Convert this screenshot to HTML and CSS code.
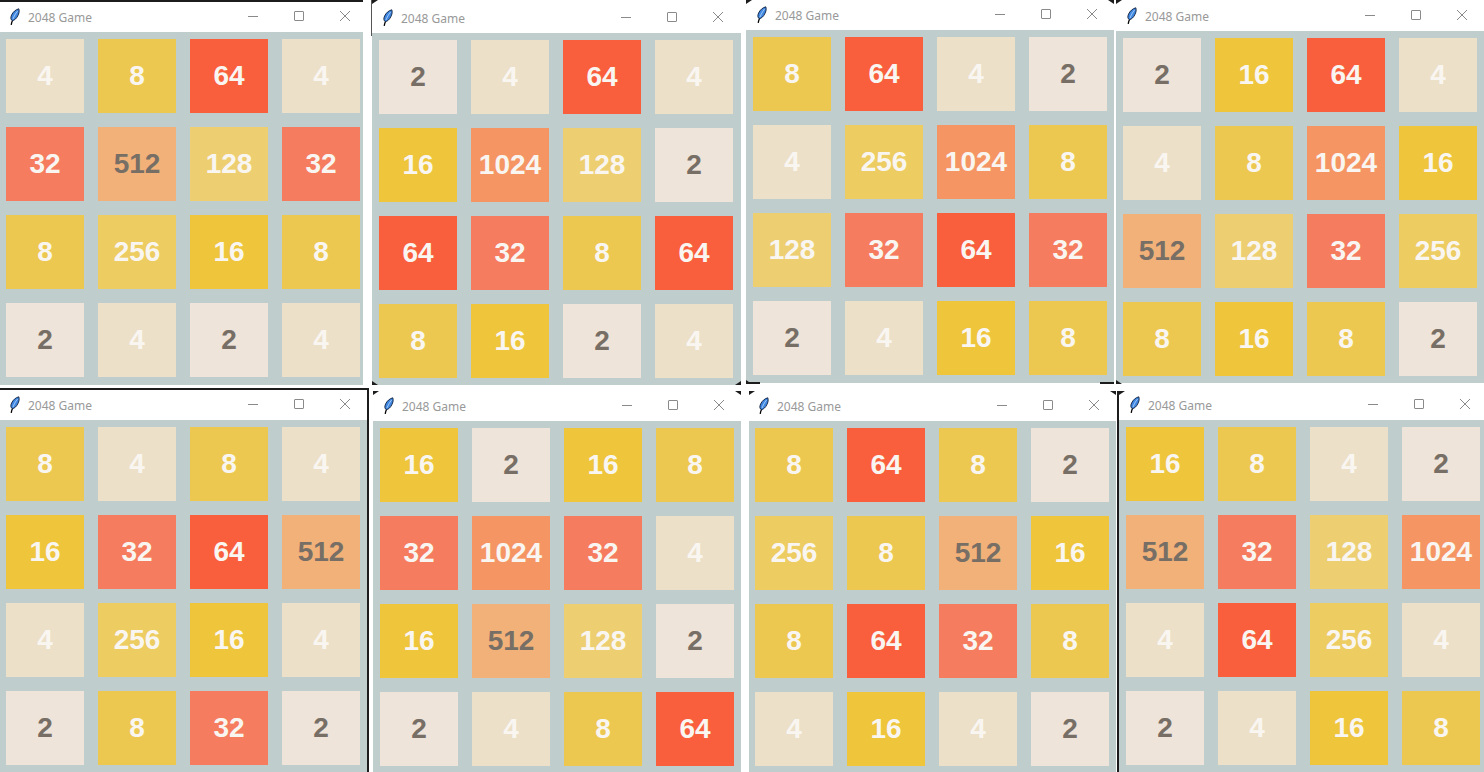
FILE: index.html
```html
<!DOCTYPE html>
<html lang="en">
<head>
<meta charset="utf-8">
<title>2048 Game</title>
<link rel="stylesheet" href="styles.css">
</head>
<body>
<svg class="defs" width="0" height="0" aria-hidden="true">
  <symbol id="feather" viewBox="0 0 12 18">
    <path d="M2.2 16.8 C2.6 14.5 3 13.4 3.6 12.2" fill="none" stroke="#000" stroke-width="1.3"/>
    <path d="M3.5 12.6 C1.6 12 1.4 9.6 2.6 7 C4 4 6.6 1.6 9.8 0.8 C10.6 3 10 5.6 8.8 7.8 C7.6 10.2 5.6 12.4 3.5 12.6 Z" fill="#3f86e0" stroke="#0b1c3a" stroke-width="0.9"/>
    <path d="M4 11 C5 8.4 6.4 5.6 8.6 3" fill="none" stroke="#a9d0f7" stroke-width="0.9"/>
  </symbol>
  <symbol id="min" viewBox="0 0 10 10"><path d="M0 5.5H10" stroke="#8a8a8a" fill="none"/></symbol>
  <symbol id="max" viewBox="0 0 10 10"><rect x="0.5" y="0.5" width="9" height="9" rx="0.5" stroke="#8a8a8a" fill="none"/></symbol>
  <symbol id="close" viewBox="0 0 10 10"><path d="M0 0L10 10M10 0L0 10" stroke="#8a8a8a" fill="none"/></symbol>
</svg>

<section class="win w1">
  <header class="bar"><svg class="feather"><use href="#feather"/></svg><span class="name">2048 Game</span><span class="ctl"><svg><use href="#min"/></svg></span><span class="ctl"><svg><use href="#max"/></svg></span><span class="ctl"><svg><use href="#close"/></svg></span></header>
  <div class="board">
    <div class="t t4">4</div><div class="t t8">8</div><div class="t t64">64</div><div class="t t4">4</div>
    <div class="t t32">32</div><div class="t t512">512</div><div class="t t128">128</div><div class="t t32">32</div>
    <div class="t t8">8</div><div class="t t256">256</div><div class="t t16">16</div><div class="t t8">8</div>
    <div class="t t2">2</div><div class="t t4">4</div><div class="t t2">2</div><div class="t t4">4</div>
  </div>
</section>

<section class="win w2">
  <header class="bar"><svg class="feather"><use href="#feather"/></svg><span class="name">2048 Game</span><span class="ctl"><svg><use href="#min"/></svg></span><span class="ctl"><svg><use href="#max"/></svg></span><span class="ctl"><svg><use href="#close"/></svg></span></header>
  <div class="board">
    <div class="t t2">2</div><div class="t t4">4</div><div class="t t64">64</div><div class="t t4">4</div>
    <div class="t t16">16</div><div class="t t1024">1024</div><div class="t t128">128</div><div class="t t2">2</div>
    <div class="t t64">64</div><div class="t t32">32</div><div class="t t8">8</div><div class="t t64">64</div>
    <div class="t t8">8</div><div class="t t16">16</div><div class="t t2">2</div><div class="t t4">4</div>
  </div>
</section>

<section class="win w3">
  <header class="bar"><svg class="feather"><use href="#feather"/></svg><span class="name">2048 Game</span><span class="ctl"><svg><use href="#min"/></svg></span><span class="ctl"><svg><use href="#max"/></svg></span><span class="ctl"><svg><use href="#close"/></svg></span></header>
  <div class="board">
    <div class="t t8">8</div><div class="t t64">64</div><div class="t t4">4</div><div class="t t2">2</div>
    <div class="t t4">4</div><div class="t t256">256</div><div class="t t1024">1024</div><div class="t t8">8</div>
    <div class="t t128">128</div><div class="t t32">32</div><div class="t t64">64</div><div class="t t32">32</div>
    <div class="t t2">2</div><div class="t t4">4</div><div class="t t16">16</div><div class="t t8">8</div>
  </div>
</section>

<section class="win w4">
  <header class="bar"><svg class="feather"><use href="#feather"/></svg><span class="name">2048 Game</span><span class="ctl"><svg><use href="#min"/></svg></span><span class="ctl"><svg><use href="#max"/></svg></span><span class="ctl"><svg><use href="#close"/></svg></span></header>
  <div class="board">
    <div class="t t2">2</div><div class="t t16">16</div><div class="t t64">64</div><div class="t t4">4</div>
    <div class="t t4">4</div><div class="t t8">8</div><div class="t t1024">1024</div><div class="t t16">16</div>
    <div class="t t512">512</div><div class="t t128">128</div><div class="t t32">32</div><div class="t t256">256</div>
    <div class="t t8">8</div><div class="t t16">16</div><div class="t t8">8</div><div class="t t2">2</div>
  </div>
</section>

<section class="win w5">
  <header class="bar"><svg class="feather"><use href="#feather"/></svg><span class="name">2048 Game</span><span class="ctl"><svg><use href="#min"/></svg></span><span class="ctl"><svg><use href="#max"/></svg></span><span class="ctl"><svg><use href="#close"/></svg></span></header>
  <div class="board">
    <div class="t t8">8</div><div class="t t4">4</div><div class="t t8">8</div><div class="t t4">4</div>
    <div class="t t16">16</div><div class="t t32">32</div><div class="t t64">64</div><div class="t t512">512</div>
    <div class="t t4">4</div><div class="t t256">256</div><div class="t t16">16</div><div class="t t4">4</div>
    <div class="t t2">2</div><div class="t t8">8</div><div class="t t32">32</div><div class="t t2">2</div>
  </div>
</section>

<section class="win w6">
  <header class="bar"><svg class="feather"><use href="#feather"/></svg><span class="name">2048 Game</span><span class="ctl"><svg><use href="#min"/></svg></span><span class="ctl"><svg><use href="#max"/></svg></span><span class="ctl"><svg><use href="#close"/></svg></span></header>
  <div class="board">
    <div class="t t16">16</div><div class="t t2">2</div><div class="t t16">16</div><div class="t t8">8</div>
    <div class="t t32">32</div><div class="t t1024">1024</div><div class="t t32">32</div><div class="t t4">4</div>
    <div class="t t16">16</div><div class="t t512">512</div><div class="t t128">128</div><div class="t t2">2</div>
    <div class="t t2">2</div><div class="t t4">4</div><div class="t t8">8</div><div class="t t64">64</div>
  </div>
</section>

<section class="win w7">
  <header class="bar"><svg class="feather"><use href="#feather"/></svg><span class="name">2048 Game</span><span class="ctl"><svg><use href="#min"/></svg></span><span class="ctl"><svg><use href="#max"/></svg></span><span class="ctl"><svg><use href="#close"/></svg></span></header>
  <div class="board">
    <div class="t t8">8</div><div class="t t64">64</div><div class="t t8">8</div><div class="t t2">2</div>
    <div class="t t256">256</div><div class="t t8">8</div><div class="t t512">512</div><div class="t t16">16</div>
    <div class="t t8">8</div><div class="t t64">64</div><div class="t t32">32</div><div class="t t8">8</div>
    <div class="t t4">4</div><div class="t t16">16</div><div class="t t4">4</div><div class="t t2">2</div>
  </div>
</section>

<section class="win w8">
  <header class="bar"><svg class="feather"><use href="#feather"/></svg><span class="name">2048 Game</span><span class="ctl"><svg><use href="#min"/></svg></span><span class="ctl"><svg><use href="#max"/></svg></span><span class="ctl"><svg><use href="#close"/></svg></span></header>
  <div class="board">
    <div class="t t16">16</div><div class="t t8">8</div><div class="t t4">4</div><div class="t t2">2</div>
    <div class="t t512">512</div><div class="t t32">32</div><div class="t t128">128</div><div class="t t1024">1024</div>
    <div class="t t4">4</div><div class="t t64">64</div><div class="t t256">256</div><div class="t t4">4</div>
    <div class="t t2">2</div><div class="t t4">4</div><div class="t t16">16</div><div class="t t8">8</div>
  </div>
</section>

<i class="edge e-top1"></i>
<i class="edge e-v371"></i>
<i class="edge e-h389"></i>
<i class="edge e-v367"></i>
<i class="edge e-v1117"></i>
<i class="edge e-b3"></i>
<i class="edge e-b3r"></i>

<i class="cn tl c1"></i><i class="cn tl c2"></i><i class="cn tr c3"></i><i class="cn tl c4"></i>
<i class="cn bl c5"></i><i class="cn br c6"></i><i class="cn bl c7"></i><i class="cn bl c8"></i>
<i class="cn tl c9"></i><i class="cn tr c10"></i><i class="cn tl c11"></i><i class="cn tr c12"></i><i class="cn tl c13"></i>
</body>
</html>
```
FILE: styles.css
```css
html, body {
  margin: 0;
  padding: 0;
  width: 1484px;
  height: 772px;
  overflow: hidden;
  background: #fff;
  position: relative;
}

.defs { position: absolute; }

/* Windows sit on a free canvas: each one keeps its captured place. */
.win {
  position: absolute;
  overflow: hidden;
  background: #c0cdcd;
}
.w1 { left: -1px; top: 2px; width: 364px; height: 383px; }
.w2 { left: 372px; top: 3px; width: 369px; height: 382px; }
.w3 { left: 746px; top: 0; width: 368px; height: 383px; }
.w4 { left: 1116px; top: 1px; width: 368px; height: 382px; }
.w5 { left: -1px; top: 390px; width: 368px; height: 382px; }
.w6 { left: 373px; top: 391px; width: 368px; height: 381px; }
.w7 { left: 748px; top: 391px; width: 368px; height: 381px; clip-path: inset(0 0 0 1px); }
.w8 { left: 1119px; top: 390px; width: 365px; height: 382px; }

.bar {
  display: flex;
  align-items: center;
  width: 369px;
  height: 30px;
  background: #fff;
}
.feather {
  width: 12px;
  height: 18px;
  margin-left: 10px;
  margin-right: 7px;
  flex: none;
}
.name {
  flex: 1;
  font: 12px/30px "Noto Sans", "Open Sans", sans-serif;
  color: #999;
  padding-top: 1px;
}
.ctl {
  width: 46px;
  height: 30px;
  display: flex;
  align-items: center;
  justify-content: center;
  padding-bottom: 2px;
  box-sizing: border-box;
}
.ctl svg { width: 10px; height: 10px; display: block; }

.board {
  display: grid;
  grid-template-columns: repeat(4, 78px);
  grid-auto-rows: 74px;
  gap: 14px;
  padding: 7px 0 0 7px;
}

.t {
  display: flex;
  align-items: center;
  justify-content: center;
  font: bold 28px "Liberation Sans", Arial, sans-serif;
  color: #f9f6f2;
}
.t2 { background: #eee4da; color: #776e65; }
.t4 { background: #ede0c8; }
.t8 { background: #edc850; }
.t16 { background: #eec53b; }
.t32 { background: #f67c5f; }
.t64 { background: #f95f3c; }
.t128 { background: #edcf72; }
.t256 { background: #edcc61; }
.t512 { background: #f2b179; color: #776e65; }
.t1024 { background: #f59563; }

/* Dark slivers of the desktop showing between the cropped windows */
.edge { position: absolute; background: #1c1c1c; }
.e-top1 { left: 0; top: 0; width: 363px; height: 2px; }
.e-v371 { left: 371px; top: 0; width: 1px; height: 36px; background: #555; }
.e-h389 { left: 0; top: 388px; width: 368px; height: 2px; }
.e-v367 { left: 367px; top: 388px; width: 2px; height: 384px; }
.e-v1117 { left: 1117px; top: 391px; width: 2px; height: 381px; }
.e-b3 { left: 746px; top: 382px; width: 14px; height: 2px; }
.e-b3r { left: 1100px; top: 382px; width: 14px; height: 2px; }

.cn { position: absolute; width: 6px; height: 4px; background: #1c1c1c; }
.tl { clip-path: polygon(0 0, 100% 0, 0 100%); }
.tr { clip-path: polygon(0 0, 100% 0, 100% 100%); }
.bl { clip-path: polygon(0 0, 100% 100%, 0 100%); }
.br { clip-path: polygon(100% 0, 100% 100%, 0 100%); }
.c1 { left: 372px; top: 0; }
.c2 { left: 746px; top: 0; }
.c3 { left: 1108px; top: 0; }
.c4 { left: 1116px; top: 0; }
.c5 { left: 372px; top: 381px; }
.c6 { left: 735px; top: 381px; }
.c7 { left: 746px; top: 380px; }
.c8 { left: 1116px; top: 380px; }
.c9 { left: 373px; top: 391px; }
.c10 { left: 735px; top: 391px; }
.c11 { left: 749px; top: 391px; }
.c12 { left: 1110px; top: 391px; }
.c13 { left: 1119px; top: 391px; }
```
